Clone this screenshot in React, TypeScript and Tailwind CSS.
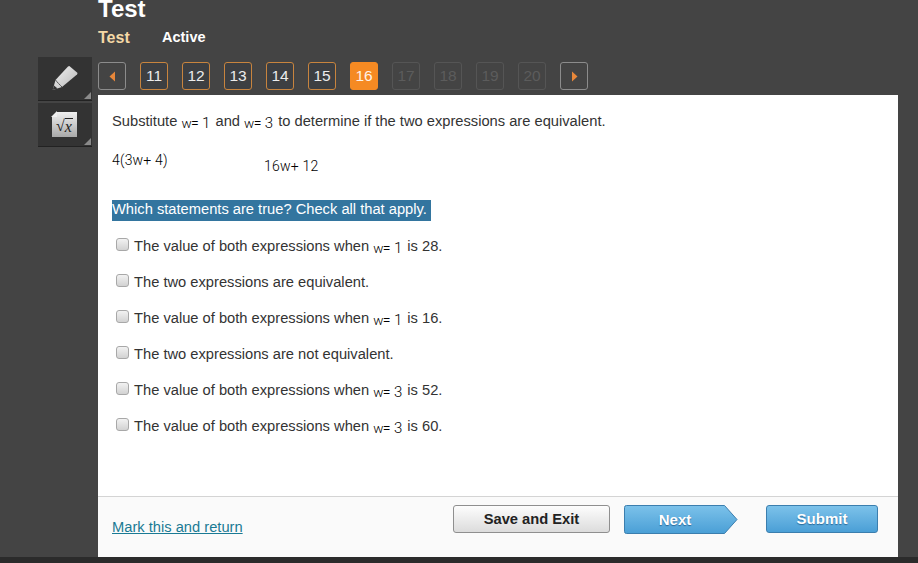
const font = { fontFamily: '"Liberation Sans", Arial, sans-serif' };

function MathText({ children, className = "" }: { children: string; className?: string }) {
  return (
    <span className={`inline-block font-['Roboto'] text-[14px] font-light leading-none tracking-[0.2px] text-black ${className}`}>
      {children}
    </span>
  );
}

function Eq({ n }: { n: number }) {
  return (
    <span className="relative top-[2px] mr-[1px] inline-flex w-[29px] items-baseline justify-between font-['Roboto'] font-light leading-none text-black">
      <span className="text-[13.500px]">w</span>
      <span className="-ml-[1px] text-[14px]">=</span>
      <span className="ml-[3px] text-[15px]">{n}</span>
    </span>
  );
}

function PageButton({ label, state }: { label: string; state: "open" | "current" | "locked" }) {
  const cls =
    state === "current"
      ? "border-[#f58a23] bg-[#f58a23] text-[#fff3e6]"
      : state === "open"
        ? "border-[#c8843e] bg-[#3d3f42] text-[#ececec]"
        : "border-[#555] text-[#5c5c5c]";
  return (
    <div className={`flex h-7 w-7 items-center justify-center rounded-[3px] border text-[15.500px] ${cls}`}>
      {label}
    </div>
  );
}

function Arrow({ dir }: { dir: "left" | "right" }) {
  return (
    <div className="flex h-7 w-7 items-center justify-center rounded-[3px] border border-[#8c8c8c]">
      <svg width="7" height="11" viewBox="0 0 7 11">
        <path d={dir === "left" ? "M6 0.5V10.5L0.5 5.5Z" : "M1 0.5V10.5L6.5 5.5Z"} fill="#e8873a" />
      </svg>
    </div>
  );
}

function Tool({ children }: { children: React.ReactNode }) {
  return (
    <div className="relative flex h-[44px] w-[54px] items-center justify-center border-b border-[#222] bg-[#333]">
      {children}
      <svg className="absolute bottom-[1px] right-[1px]" width="7" height="7" viewBox="0 0 7 7">
        <path d="M7 0V7H0Z" fill="#8a8a8a" />
      </svg>
    </div>
  );
}

function Row({ children }: { children: React.ReactNode }) {
  return (
    <div className="flex h-9 items-start">
      <span className="ml-1 mt-[1px] h-[13px] w-[13px] shrink-0 rounded-[3px] border border-[#a8a8a8] bg-gradient-to-b from-[#f2f2f2] to-[#d2d2d2]" />
      <span className="ml-[5px] whitespace-nowrap">{children}</span>
    </div>
  );
}

export default function App() {
  return (
    <div className="flex h-[563px] w-[918px] flex-col overflow-hidden bg-[#444]" style={font}>
      <div className="flex h-[557px]">
        <div className="flex w-[98px] shrink-0 flex-col items-end pr-[6px] pt-[57px]">
          <Tool>
            <svg className="-mt-[2px]" width="28" height="28" viewBox="0 0 28 28">
              <defs>
                <linearGradient id="pen" x1="0" y1="0" x2="1" y2="1">
                  <stop offset="0" stopColor="#f4f4f4" />
                  <stop offset="1" stopColor="#b5b5b5" />
                </linearGradient>
              </defs>
              <path d="M18.300 2L26.300 8.700Q26.800 9.500 26 10.500L11 23L1.700 26L4.500 16L17 2.500Z" fill="url(#pen)" />
              <path d="M4.500 16C6 18 9 21 11 23" stroke="#555" strokeWidth="1" fill="none" />
              <path d="M1.700 26L3 21.500L6.500 24.500Z" fill="#333" />
            </svg>
          </Tool>
          <div className="h-[2px]" />
          <Tool>
            <div className="relative -ml-[1px] flex h-[25px] w-[25px] items-center justify-center bg-gradient-to-b from-[#f0f0f0] to-[#a9a9a9] pt-[3px] font-['Liberation_Serif'] text-[16px] leading-none text-[#222]">
              <span className="absolute -left-px -top-px h-0 w-0 border-b-[6px] border-l-[6px] border-b-[#f0f0f0] border-l-[#333]" />
              <span>√</span>
              <span className="border-t border-[#222] pr-[1px] italic">x</span>
            </div>
          </Tool>
        </div>

        <div className="flex w-[800px] flex-col">
          <h1 className="h-[22px] text-[24px] font-bold leading-[17px] text-white">Test</h1>
          <div className="mt-[6px] flex h-[20px] items-center font-bold">
            <span className="w-[64px] text-[16px] text-[#f5d9a6]">Test</span>
            <span className="text-[14.500px] text-white">Active</span>
          </div>
          <div className="mt-[14px] flex gap-[14px]">
            <Arrow dir="left" />
            {[11, 12, 13, 14, 15].map((n) => (
              <PageButton key={n} label={String(n)} state="open" />
            ))}
            <PageButton label="16" state="current" />
            {[17, 18, 19, 20].map((n) => (
              <PageButton key={n} label={String(n)} state="locked" />
            ))}
            <Arrow dir="right" />
          </div>

          <div className="mt-[5px] flex flex-1 flex-col bg-white text-[14.700px] leading-[18px] text-[#333]">
            <div className="flex-1 pl-[14px] pt-[17px]">
              <p className="whitespace-nowrap">
                Substitute <Eq n={1} /> and <Eq n={3} /> to determine if the two expressions are equivalent.
              </p>
              <div className="mt-[20px] flex h-[28px] items-start">
                <MathText className="w-[152px] pt-[3px]">4(3w+ 4)</MathText>
                <MathText className="pt-[9px]">16w+ 12</MathText>
              </div>
              <div className="mt-[22px]">
                <span className="block h-[21px] w-[319px] bg-[#33759f] leading-[19px] whitespace-nowrap text-white">
                  Which statements are true? Check all that apply.
                </span>
              </div>
              <div className="mt-[16px] flex flex-col">
                <Row>
                  The value of both expressions when <Eq n={1} /> is 28.
                </Row>
                <Row>The two expressions are equivalent.</Row>
                <Row>
                  The value of both expressions when <Eq n={1} /> is 16.
                </Row>
                <Row>The two expressions are not equivalent.</Row>
                <Row>
                  The value of both expressions when <Eq n={3} /> is 52.
                </Row>
                <Row>
                  The value of both expressions when <Eq n={3} /> is 60.
                </Row>
              </div>
            </div>

            <div className="flex h-[61px] items-start border-t border-[#d4d4d4] bg-[#fafafa] pl-[14px] pt-[8px]">
              <a className="mt-[13px] w-[341px] text-[#1a7a94] underline">Mark this and return</a>
              <button className="h-[28px] w-[157px] rounded-[3px] border border-[#8f8f8f] bg-gradient-to-b from-[#fdfdfd] to-[#dcdcdc] text-[14.700px] font-bold text-[#222]">
                Save and Exit
              </button>
              <button className="relative ml-[14px] h-[29px] w-[114px] text-[15px] font-bold text-white [text-shadow:0_1px_1px_#2a6a99]">
                <svg className="absolute inset-0" width="114" height="29" viewBox="0 0 114 29">
                  <defs>
                    <linearGradient id="next" x1="0" y1="0" x2="0" y2="1">
                      <stop offset="0" stopColor="#7cc2ea" />
                      <stop offset="1" stopColor="#4a9fd6" />
                    </linearGradient>
                  </defs>
                  <path d="M2.500 .5H100.500L113 14.500L100.500 28.500H2.500Q.5 28.500 .5 26.500V2.500Q.5 .5 2.500 .5Z" fill="url(#next)" stroke="#3b7eae" />
                </svg>
                <span className="relative -ml-[12px]">Next</span>
              </button>
              <button className="ml-[28px] h-[28px] w-[112px] rounded-[3px] border border-[#3b7eae] bg-gradient-to-b from-[#7cc2ea] to-[#4a9fd6] text-[15px] font-bold text-white [text-shadow:0_1px_1px_#2a6a99]">
                Submit
              </button>
            </div>
          </div>
        </div>
      </div>
      <div className="h-[6px] bg-[#2b2b2b]" />
    </div>
  );
}
